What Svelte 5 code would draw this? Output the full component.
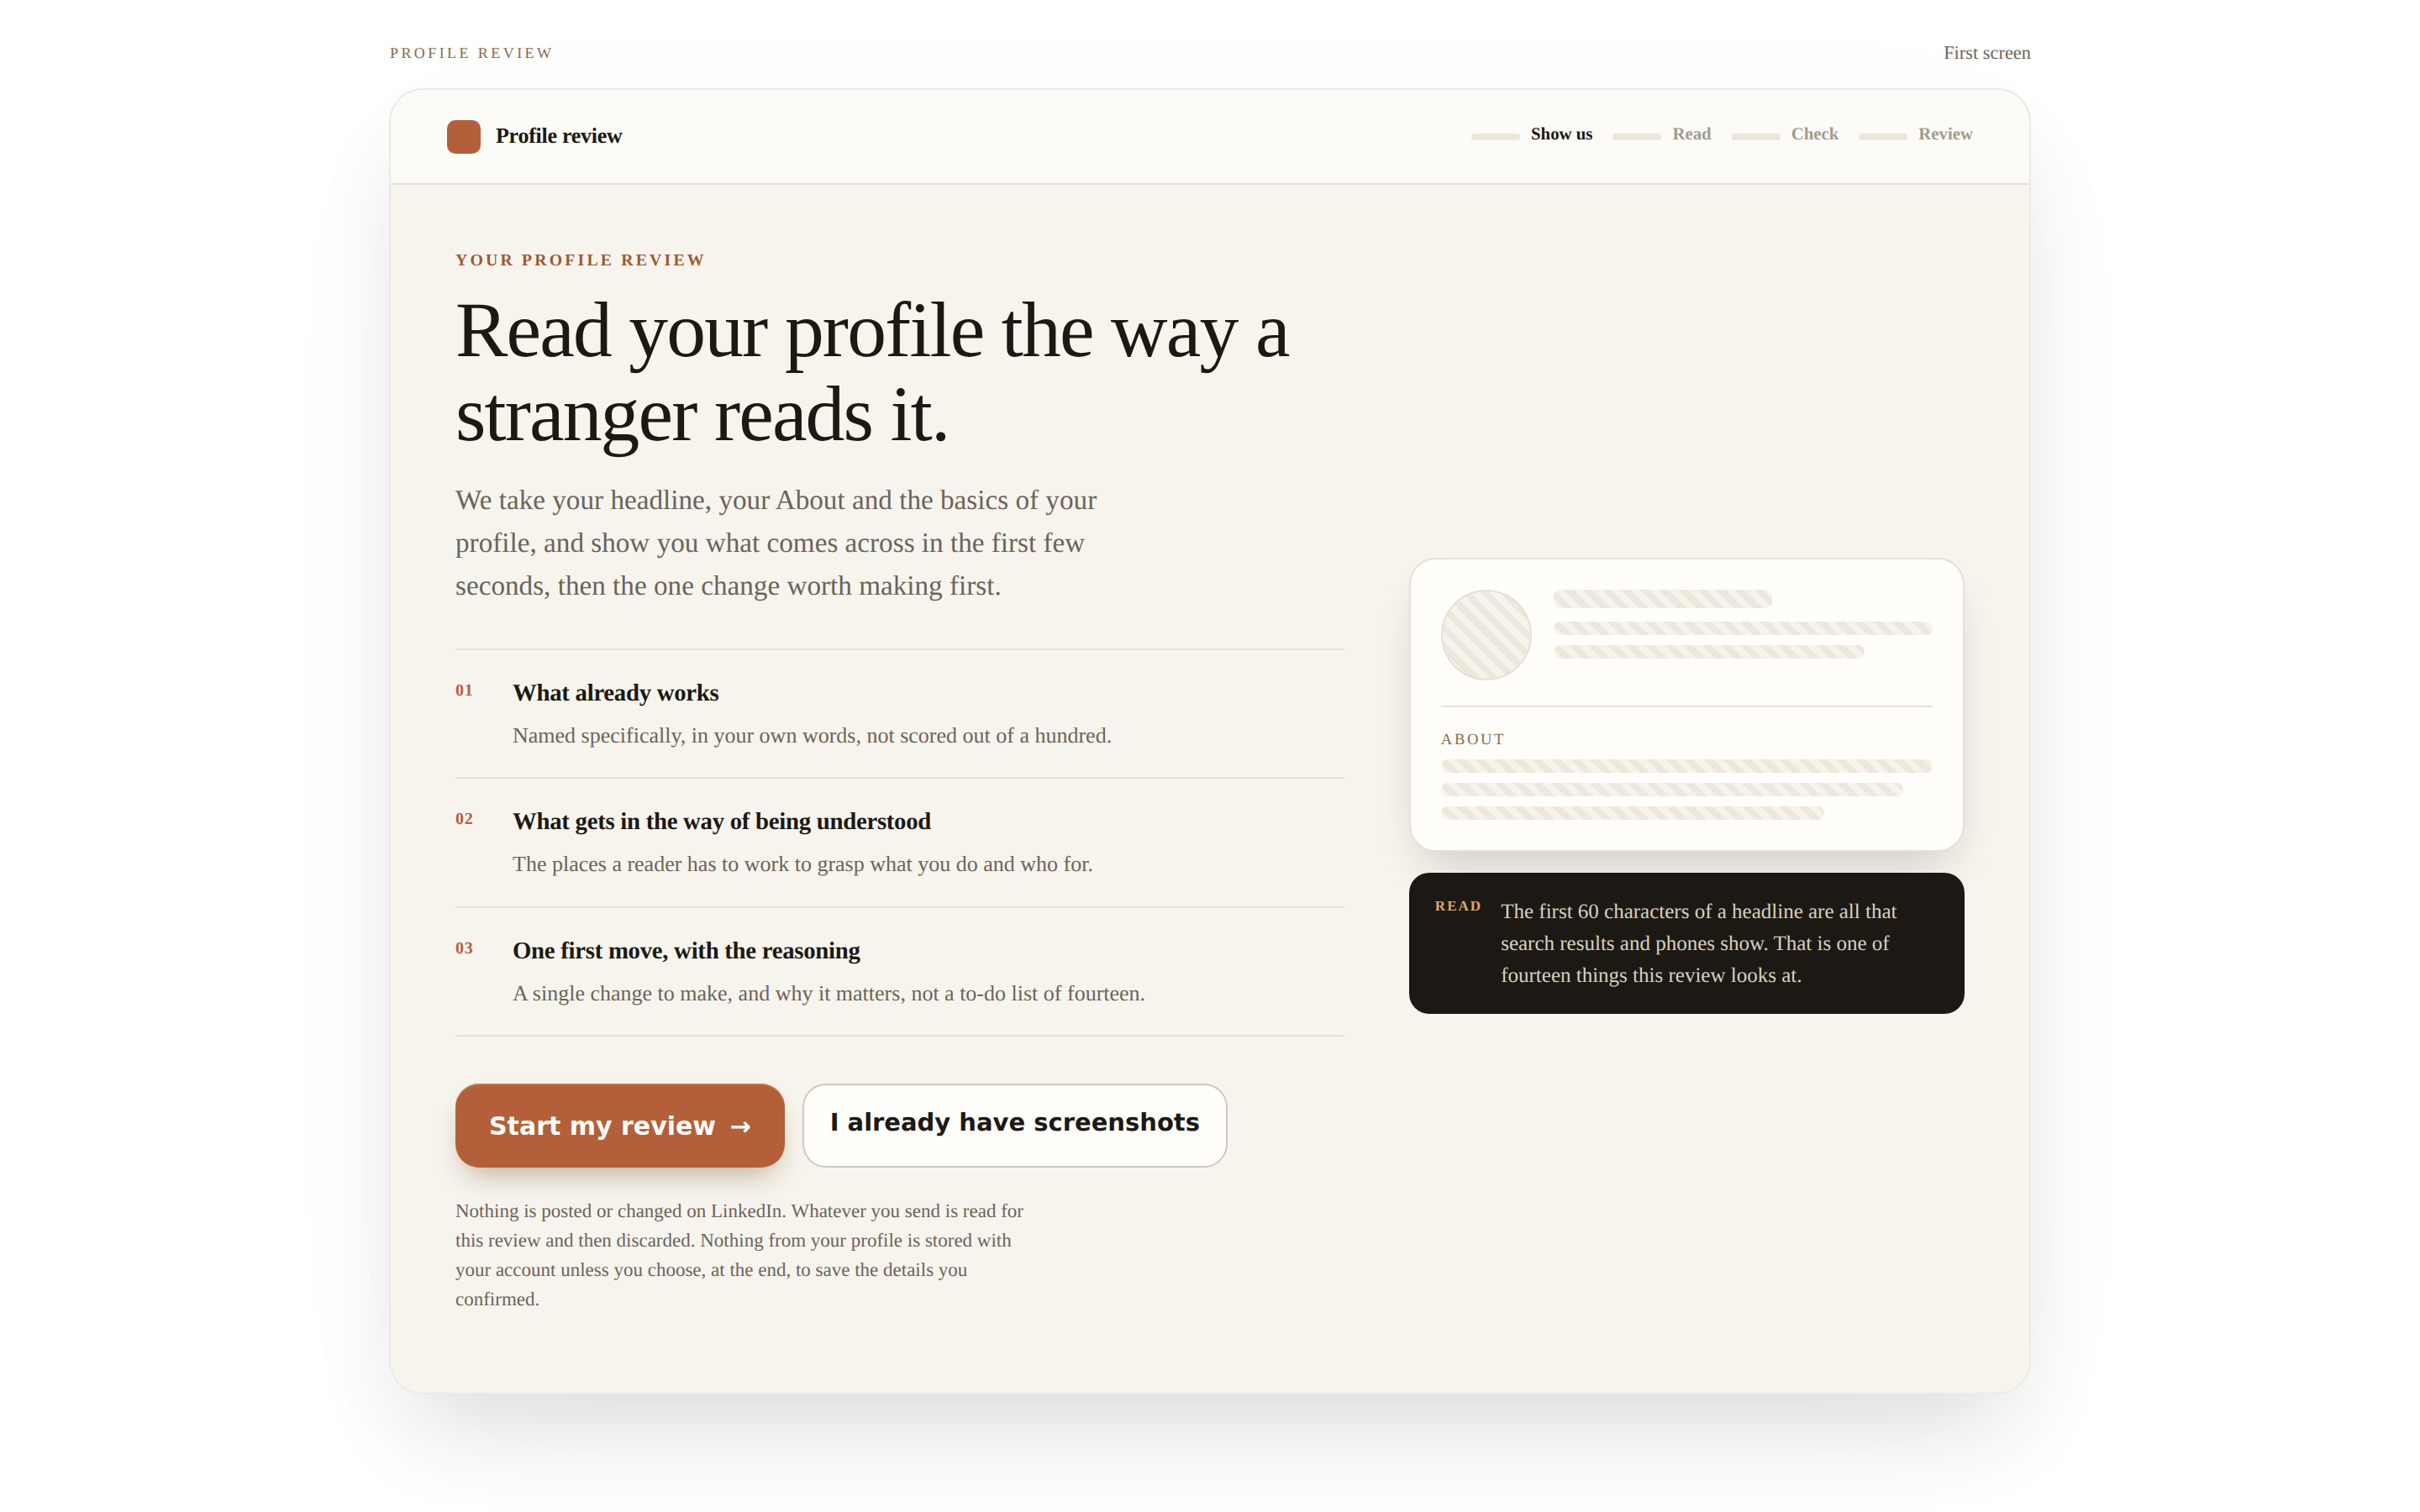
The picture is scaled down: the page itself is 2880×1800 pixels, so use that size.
<script lang="ts">
  const steps = [
    { label: "Show us", active: true },
    { label: "Read", active: false },
    { label: "Check", active: false },
    { label: "Review", active: false }
  ];

  const points = [
    { n: "01", title: "What already works", text: "Named specifically, in your own words, not scored out of a hundred." },
    { n: "02", title: "What gets in the way of being understood", text: "The places a reader has to work to grasp what you do and who for." },
    { n: "03", title: "One first move, with the reasoning", text: "A single change to make, and why it matters, not a to-do list of fourteen." }
  ];
</script>

<div class="page">
  <div class="topline">
    <span class="overline">PROFILE REVIEW</span>
    <span class="screen-name">First screen</span>
  </div>

  <div class="frame">
    <header class="bar">
      <div class="brand">
        <span class="mark"></span>
        <strong>Profile review</strong>
      </div>
      <nav class="steps">
        {#each steps as step}
          <div class="step" class:active={step.active}>
            <span class="dash"></span>
            <span class="step-label">{step.label}</span>
          </div>
        {/each}
      </nav>
    </header>

    <main class="body">
      <section class="intro">
        <p class="kicker">YOUR PROFILE REVIEW</p>
        <h1>Read your profile the way a stranger reads it.</h1>
        <p class="lede">We take your headline, your About and the basics of your profile, and show you what comes across in the first few seconds, then the one change worth making first.</p>

        <ol class="points">
          {#each points as p}
            <li>
              <span class="num">{p.n}</span>
              <div>
                <h3>{p.title}</h3>
                <p>{p.text}</p>
              </div>
            </li>
          {/each}
        </ol>

        <div class="actions">
          <button class="primary">Start my review <span class="arrow">→</span></button>
          <a class="secondary" href="#screens">I already have screenshots</a>
        </div>

        <p class="fine">Nothing is posted or changed on LinkedIn. Whatever you send is read for this review and then discarded. Nothing from your profile is stored with your account unless you choose, at the end, to save the details you confirmed.</p>
      </section>

      <aside class="side">
        <div class="card">
          <div class="who">
            <div class="avatar"></div>
            <div class="lines">
              <div class="ph name"></div>
              <div class="ph w100"></div>
              <div class="ph w82"></div>
            </div>
          </div>
          <div class="about">
            <p class="about-label">ABOUT</p>
            <div class="ph w100"></div>
            <div class="ph w94"></div>
            <div class="ph w78"></div>
          </div>
        </div>
        <div class="note">
          <span class="note-tag">READ</span>
          <p>The first 60 characters of a headline are all that search results and phones show. That is one of fourteen things this review looks at.</p>
        </div>
      </aside>
    </main>
  </div>
</div>

<style>
  :global(body) {
    margin: 0;
    background: #fff;
    font-family: "Liberation Serif", "Times New Roman", serif;
    color: #1c1914;
    text-rendering: geometricPrecision;
  }

  .page {
    width: 1954px;
    margin: 0 auto;
    padding-top: 49px;
    height: 1751px;
  }

  .topline {
    display: flex;
    justify-content: space-between;
    align-items: center;
    height: 28px;
    margin-bottom: 28px;
  }

  .overline {
    font-size: 18px;
    letter-spacing: 0.19em;
    padding-left: 1px;
    color: #8a6a4c;
  }

  .screen-name {
    font-size: 22.4px;
    color: #6b6459;
  }

  .frame {
    border: 2px solid #eceae6;
    border-radius: 40px;
    overflow: hidden;
    background: #f7f4ee;
    box-shadow:
      0 60px 120px -30px rgba(0, 0, 0, 0.14),
      0 40px 240px rgba(0, 0, 0, 0.02);
  }

  .bar {
    display: flex;
    justify-content: space-between;
    align-items: center;
    height: 111px;
    padding: 0 67px;
    background: #fcfbf8;
    border-bottom: 2px solid #e6e0d6;
  }

  .brand {
    display: flex;
    align-items: center;
    gap: 18px;
  }

  .brand strong {
    font-size: 26px;
    letter-spacing: -0.01em;
    padding-bottom: 2px;
    color: #1c1914;
  }

  .mark {
    width: 40px;
    height: 40px;
    border-radius: 10px;
    background: #b3603a;
  }

  .steps {
    display: flex;
    gap: 24px;
    font-size: 20.8px;
    font-weight: 700;
    color: #a39b8c;
  }

  .step {
    display: flex;
    align-items: center;
    gap: 13px;
  }

  .step-label {
    padding-bottom: 6px;
  }

  .step.active {
    color: #1c1914;
  }

  .dash {
    width: 58px;
    height: 8px;
    border-radius: 4px;
    background: #ebe6da;
  }

  .body {
    display: grid;
    grid-template-columns: 1.6fr 1fr;
    gap: 77px;
    align-items: center;
    padding: 79px 77px 94.5px;
  }

  .kicker {
    margin: 0 0 22px;
    font-size: 19.8px;
    font-weight: 700;
    letter-spacing: 0.16em;
    color: #9c5a32;
  }

  h1 {
    margin: 0 0 26px;
    font-size: 93.6px;
    font-weight: 400;
    line-height: 100px;
    letter-spacing: -0.02em;
    color: #1c1914;
  }

  .lede {
    margin: 0 0 49px;
    max-width: 800px;
    font-size: 33.2px;
    line-height: 51px;
    color: #6b6459;
  }

  .points {
    list-style: none;
    margin: 0 0 56px;
    padding: 0;
    border-top: 2px solid #e6e0d6;
  }

  .points li {
    display: grid;
    grid-template-columns: 68px 1fr;
    padding-top: 32px;
    height: 119.4px;
    border-bottom: 2px solid #e6e0d6;
  }

  .num {
    font-size: 20px;
    font-weight: 700;
    letter-spacing: 0.04em;
    color: #b3603a;
    line-height: 32px;
  }

  h3 {
    margin: 0 0 12px;
    font-size: 28.8px;
    line-height: 38px;
    font-weight: 700;
    letter-spacing: -0.01em;
    color: #1c1914;
  }

  .points p {
    margin: 0;
    font-size: 26px;
    line-height: 40px;
    color: #6b6459;
  }

  .actions {
    display: flex;
    gap: 21px;
    margin-bottom: 33.5px;
  }

  .primary,
  .secondary {
    box-sizing: border-box;
    height: 100px;
    font-family: "DejaVu Sans", sans-serif;
    font-weight: 700;
    border-radius: 28px;
    text-decoration: none;
  }

  .primary {
    padding: 0 40px;
    border: none;
    font-size: 30px;
    background: #b3603a;
    color: #fffefb;
    box-shadow:
      inset 0 2px 0 rgba(214, 170, 100, 0.35),
      0 18px 34px -12px rgba(120, 80, 30, 0.45);
  }

  .arrow {
    margin-left: 6px;
  }

  .secondary {
    padding: 27px 31px;
    border: 2px solid #d2c7ba;
    font-size: 29px;
    background: #fffefb;
    color: #1c1914;
  }

  .fine {
    margin: 0;
    max-width: 700px;
    font-size: 23px;
    line-height: 35px;
    color: #6b6459;
  }

  .side {
    display: flex;
    flex-direction: column;
    gap: 25px;
    margin-top: 8.5px;
  }

  .card {
    padding: 36px;
    border: 2px solid #e6e0d6;
    border-radius: 32px;
    background: #fffefb;
    box-shadow: 0 28px 56px -20px rgba(28, 25, 20, 0.22);
  }

  .who {
    display: flex;
    gap: 26px;
    padding-bottom: 30px;
    border-bottom: 2px solid #e6e0d6;
  }

  .avatar {
    flex: none;
    box-sizing: border-box;
    width: 108px;
    height: 108px;
    border-radius: 50%;
    border: 2px solid #e6e0d6;
    background: repeating-linear-gradient(45deg, #f5f3eb 0 8px, #ece8dc 8px 16px);
  }

  .lines {
    flex: 1;
    display: flex;
    flex-direction: column;
    gap: 12px;
  }

  .ph {
    height: 16px;
    border-radius: 8px;
    background: repeating-linear-gradient(45deg, #f5f3eb 0 8px, #ece8dc 8px 16px);
  }

  .ph.name {
    width: 260px;
    height: 22px;
    margin-bottom: 4px;
  }

  .w100 { width: 100%; }
  .w94 { width: 94%; }
  .w82 { width: 82%; }
  .w78 { width: 78%; }

  .about {
    display: flex;
    flex-direction: column;
    gap: 12px;
    padding-top: 28px;
  }

  .about-label {
    margin: 0;
    font-size: 18.6px;
    line-height: 22px;
    letter-spacing: 0.14em;
    color: #8a6a4c;
  }

  .note {
    display: flex;
    gap: 22px;
    padding: 28px 31px 26px;
    border-radius: 24px;
    background: #1c1914;
  }

  .note-tag {
    font-size: 17px;
    font-weight: 700;
    letter-spacing: 0.12em;
    line-height: 23px;
    color: #e0a56c;
  }

  .note p {
    margin: 0;
    font-size: 25px;
    line-height: 38px;
    color: #d9cfc0;
  }
</style>
